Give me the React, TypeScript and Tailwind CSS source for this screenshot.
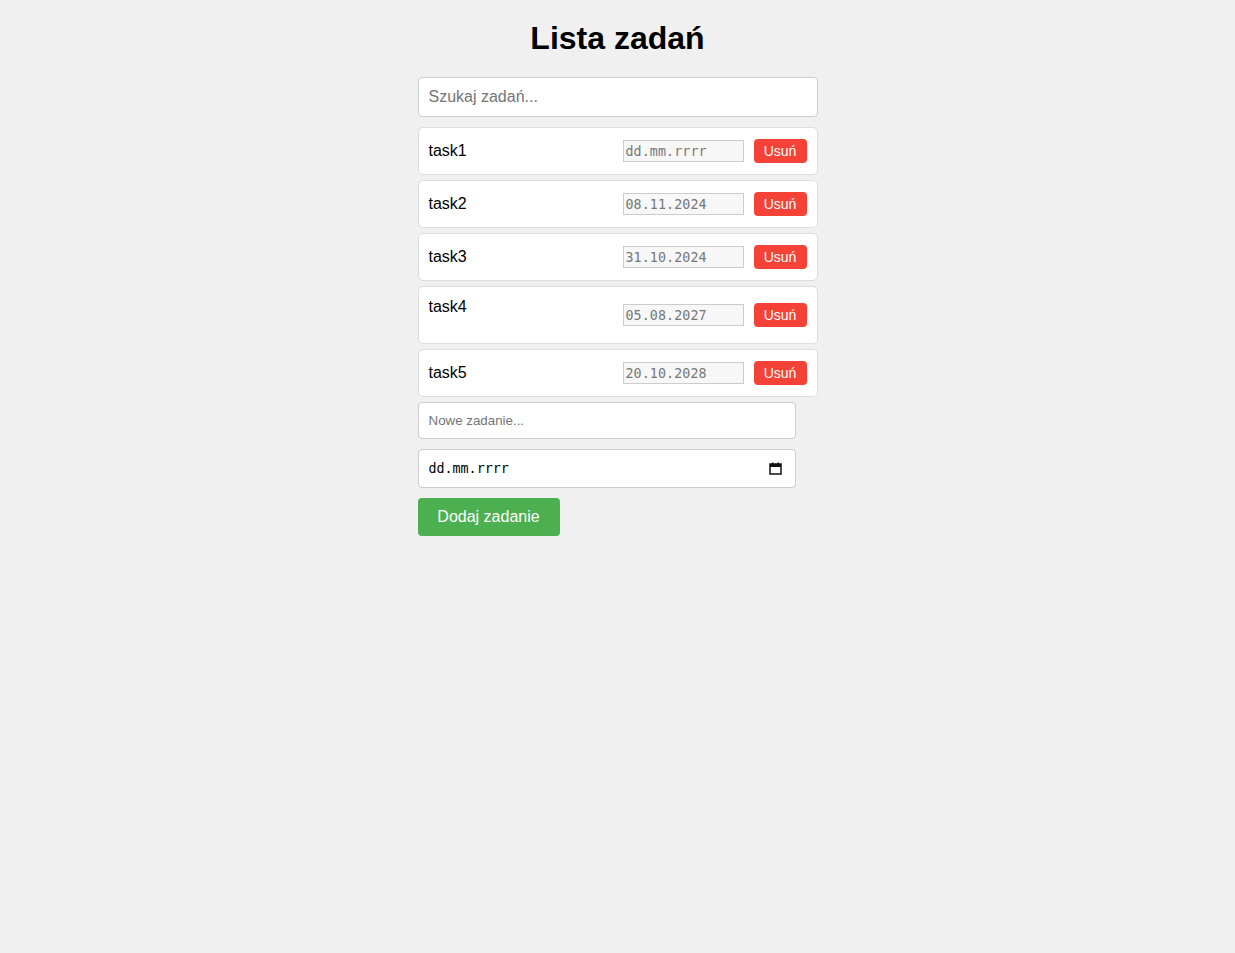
const tasks = [
  { name: "task1", date: "dd.mm.rrrr", tall: false },
  { name: "task2", date: "08.11.2024", tall: false },
  { name: "task3", date: "31.10.2024", tall: false },
  { name: "task4", date: "05.08.2027", tall: true },
  { name: "task5", date: "20.10.2028", tall: false },
];

const CalendarIcon = () => (
  <svg width="13" height="13" viewBox="0 0 13 13" fill="none">
    <rect x="1" y="2" width="11" height="10" stroke="#111" strokeWidth="1.5" />
    <rect x="1" y="2" width="11" height="3" fill="#111" />
    <rect x="3" y="0.5" width="1.5" height="2" fill="#111" />
    <rect x="8.5" y="0.5" width="1.5" height="2" fill="#111" />
  </svg>
);

const App = () => {
  return (
    <div className="min-h-[953px] bg-[#f0f0f0] font-['Liberation_Sans',Arial,sans-serif] text-black">
      <div className="w-[400px] mx-auto pt-[20px] flex flex-col">
        <h1 className="text-[32px] leading-[37px] font-bold text-center">Lista zadań</h1>
        <div className="mt-[20px] h-[40px] bg-white border border-[#ccc] rounded-[4px] px-[10px] flex items-center text-[16px] text-[#757575]">
          Szukaj zadań...
        </div>
        <div className="mt-[10px] flex flex-col gap-[5px]">
          {tasks.map((t) => (
            <div
              key={t.name}
              className={
                t.tall
                  ? "h-[58px] bg-white border border-[#ddd] rounded-[5px] px-[10px] flex items-center justify-between"
                  : "h-[48px] bg-white border border-[#ddd] rounded-[5px] px-[10px] flex items-center justify-between"
              }
            >
              <span className={t.tall ? "self-start pt-[8px] text-[16px]" : "text-[16px]"}>{t.name}</span>
              <div className="flex items-center gap-[10px]">
                <div className="w-[121px] h-[22px] bg-[#f7f7f7] border border-[#ccc] px-[2px] pt-[1px] flex items-center text-[13.33px] text-[#777] tracking-[0.1px] font-['DejaVu_Sans_Mono',monospace]">
                  {t.date}
                </div>
                <button className="w-[53px] h-[24px] bg-[#f44336] text-white rounded-[4px] text-[14px] flex items-center justify-center">
                  Usuń
                </button>
              </div>
            </div>
          ))}
        </div>
        <div className="mt-[5px] w-[378px] h-[37px] bg-white border border-[#ccc] rounded-[4px] px-[10px] flex items-center text-[13.33px] text-[#757575]">
          Nowe zadanie...
        </div>
        <div className="mt-[10px] w-[378px] h-[39px] bg-white border border-[#ccc] rounded-[4px] pl-[10px] pr-[13px] flex items-center justify-between">
          <span className="text-[13.33px] pt-[1px] font-['DejaVu_Sans_Mono',monospace]">dd.mm.rrrr</span>
          <CalendarIcon />
        </div>
        <button className="mt-[10px] w-[142px] h-[38px] bg-[#4caf50] text-white rounded-[4px] text-[16px] flex items-center justify-center">
          Dodaj zadanie
        </button>
      </div>
    </div>
  );
};

export default App;
